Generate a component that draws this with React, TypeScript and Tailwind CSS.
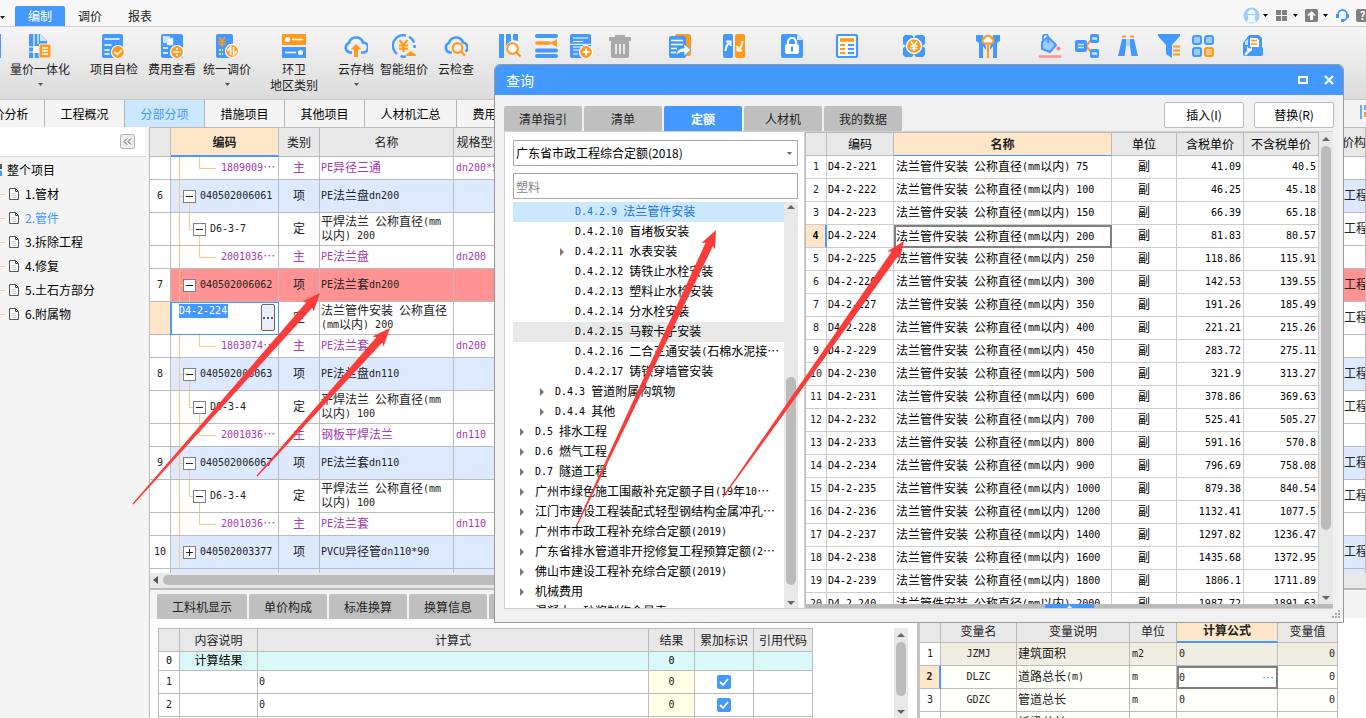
import React, { useState } from 'react';

const B = '#4399ff';
const O = '#ff9a1a';

// Latin runs are set in a monospace face, half the width of a CJK glyph
const Mix: React.FC<{ t: string }> = ({ t }) => (
  <span className="inline-block pb-[2px] whitespace-pre">
    {t.split(/([\x20-\x7e]+)/).map((s, i) =>
      i % 2 ? <span key={i} className="align-[1px] font-['DejaVu_Sans_Mono',monospace] text-[10px] leading-none">{s}</span> : s
    )}
  </span>
);

/* ---------- toolbar icons, 24 x 24 ---------- */

const icons: Record<string, React.ReactNode> = {
  integrate: (
    <>
      <path d="M1 0h11l7 7v17H1z" fill={B} />
      <path d="M12 0v7h7z" fill="#cfe5ff" />
      <path d="M6 0v24M10 0v10M1 13h18M1 18h9" stroke="#fff" strokeWidth="1.2" />
      <rect x="5" y="12" width="6" height="7" fill="#fff" />
      <rect x="11" y="10" width="12" height="14" rx="2" fill={O} stroke="#f0f0f0" />
      <path d="M14 14h6M14 17h6M14 20h6" stroke="#fff" strokeWidth="1.4" />
    </>
  ),
  check: (
    <>
      <rect x="0" y="0" width="21" height="24" rx="2" fill={B} />
      <path d="M3 5h14M3 11h6M3 16h4M3 20h4" stroke="#fff" strokeWidth="1.6" strokeLinecap="round" />
      <circle cx="16" cy="18" r="6.5" fill={O} stroke="#fff" strokeWidth="1.2" />
      <path d="M12.5 18l3 2.6 4.2-4.6" stroke="#fff" strokeWidth="1.8" fill="none" />
    </>
  ),
  cost: (
    <>
      <rect x="1" y="0" width="22" height="24" rx="2" fill={B} />
      <path d="M3 2h7v7H3z" fill="#cfe5ff" />
      <path d="M7 4h6v7H7z" fill="#fff" stroke="#a9d0ff" strokeWidth=".7" />
      <path d="M3 14h5M3 19h5" stroke="#fff" strokeWidth="1.6" />
      <circle cx="17" cy="18" r="6.5" fill={O} stroke="#fff" strokeWidth="1.2" />
      <path d="M13 18h8" stroke="#fff" strokeWidth="1.5" />
      <circle cx="17" cy="15" r="1" fill="#fff" />
      <circle cx="17" cy="21" r="1" fill="#fff" />
    </>
  ),
  adjust: (
    <>
      <rect x="1" y="0" width="17" height="24" rx="2" fill={B} />
      <path d="M4 3l3 4 3-4M7 7v6M3.5 7.5h7M3.5 10h7" stroke={O} strokeWidth="1.6" fill="none" />
      <path d="M4 16h4M4 20h4" stroke="#fff" strokeWidth="1.5" strokeDasharray="2 1" />
      <circle cx="17" cy="17" r="6.6" fill={O} stroke="#fff" strokeWidth="1.2" />
      <path d="M15.6 21v-8l-3.2 4M18.6 13v8l3-4" stroke="#fff" strokeWidth="1.7" fill="none" />
    </>
  ),
  region: (
    <>
      <rect x="0" y="0" width="24" height="11" fill={O} />
      <rect x="0" y="13" width="24" height="11" fill={B} />
      <circle cx="5.5" cy="5.5" r="2.6" fill="#fff" />
      <path d="M10 5.5h11M3 18.5h11" stroke="#fff" strokeWidth="1.6" />
      <circle cx="18.5" cy="18.5" r="2.6" fill="#fff" />
    </>
  ),
  cloudUp: (
    <>
      <path d="M8 18.5H6a5 5 0 0 1-1-9.6A7.3 7.3 0 0 1 19 8.5a5 5 0 0 1 0 10h-2" stroke={B} strokeWidth="2.6" fill="none" />
      <path d="M12 10l5.5 5.5H14V23h-4v-7.5H6.5z" fill={O} />
    </>
  ),
  smart: (
    <>
      <path d="M14 1.5A10.5 10.5 0 0 0 5 20M8.5 22.2A10.5 10.5 0 0 0 14 22.4M17 2.7a10.5 10.5 0 0 1 5 6M22.6 11v3" stroke={B} strokeWidth="2.4" fill="none" />
      <path d="M7.5 6l4 5 4-5M11.5 11v7M7 11.5h9M7 14.7h9" stroke={O} strokeWidth="2.2" fill="none" />
      <path d="M14 22h10c0-2-1.5-3-3-3-.5-2-4-2-4.3 0-1.7 0-2.7 1.2-2.7 3z" fill={O} />
    </>
  ),
  cloudFind: (
    <>
      <path d="M8 18.5H6a5 5 0 0 1-1-9.6A7.3 7.3 0 0 1 19 8.5a5 5 0 0 1 2.5 9" stroke={B} strokeWidth="2.6" fill="none" />
      <circle cx="13.5" cy="14" r="4.8" stroke={O} strokeWidth="2.2" fill="none" />
      <path d="M17 17.5l4 4" stroke={O} strokeWidth="2.4" />
    </>
  ),
  query: (
    <>
      <path d="M1 0h5v24H1zM8 0h5v7l-3 2-2 3zM15 0h5v7l-5-1z" fill={B} />
      <circle cx="14.5" cy="14.5" r="5.3" stroke={O} strokeWidth="2" fill="#fff" />
      <path d="M18.5 18.5l4 4" stroke={O} strokeWidth="2.4" />
    </>
  ),
  insertRow: (
    <>
      <path d="M3 2h19M3 16.5h19M3 22h19" stroke={B} strokeWidth="4" strokeLinecap="round" />
      <path d="M3 9h12" stroke={O} strokeWidth="3.6" strokeLinecap="round" />
      <path d="M23 5v8l-7-4z" fill={O} />
    </>
  ),
  addItem: (
    <>
      <rect x="1" y="0" width="21" height="24" rx="2" fill={B} />
      <path d="M4 4h15M4 7.5h10M4 13h14M4 16h8M4 20h5" stroke="#fff" strokeWidth="1.2" />
      <path d="M1 10.3h21" stroke="#fff" />
      <circle cx="17" cy="18" r="6.5" fill={O} stroke="#fff" strokeWidth="1.2" />
      <path d="M13.5 18h7M17 14.5v7" stroke="#fff" strokeWidth="2" />
    </>
  ),
  trash: (
    <>
      <path d="M1 3h6V1h10v2h6v4H1z" fill="#a9a9a9" />
      <path d="M3 7h18v15a2 2 0 0 1-2 2H5a2 2 0 0 1-2-2z" fill="#a9a9a9" />
      <path d="M8 10v10M12 10v10M16 10v10" stroke="#f4f4f4" strokeWidth="1.7" />
    </>
  ),
  copyTo: (
    <>
      <rect x="7" y="0" width="16" height="22" rx="2" fill={O} />
      <rect x="1" y="2" width="17" height="22" rx="2" fill={B} />
      <path d="M3 6.5h12M3 10.5h12M3 14.5h6M3 18.5h5" stroke="#fff" strokeWidth="1.3" />
      <path d="M8 21c1-5 4-7 8-7v-4l7 6-7 6v-4c-3 0-5 1-8 3z" fill="#fff" stroke={B} strokeWidth=".8" />
    </>
  ),
  swap: (
    <>
      <rect x="1" y="0" width="10" height="24" rx="2" fill={B} />
      <rect x="13" y="0" width="10" height="24" rx="2" fill={O} />
      <path d="M3.5 17c.3-4 1-6 3.5-8M4 7.5h4.5V12" stroke="#fff" strokeWidth="2" fill="none" />
      <path d="M20.5 7c-.3 4-1 6-3.5 8M20 16.5h-4.5V12" stroke="#fff" strokeWidth="2" fill="none" />
    </>
  ),
  lock: (
    <>
      <path d="M3 0h14l6 6v16a2 2 0 0 1-2 2H3a2 2 0 0 1-2-2V2a2 2 0 0 1 2-2z" fill={B} />
      <path d="M17 0v6h6z" fill="#cfe5ff" />
      <rect x="5" y="10" width="14" height="10" rx="2" fill="#fff" />
      <path d="M8 11V8a4 4 0 0 1 8 0v3" stroke="#fff" strokeWidth="2.2" fill="none" />
      <path d="M12 12.5v5" stroke={B} strokeWidth="2" />
    </>
  ),
  report: (
    <>
      <rect x="2" y="1" width="20" height="22" rx="1.5" fill="#fff" stroke={B} strokeWidth="2.2" />
      <path d="M5 6h14" stroke={O} strokeWidth="3.6" />
      <path d="M5 11h5M5 15h5M5 19h5" stroke={O} strokeWidth="1.8" />
      <path d="M13 11h6M13 15h6M13 19h6" stroke={B} strokeWidth="1.8" />
    </>
  ),
  money: (
    <>
      <path d="M3 1h7l2 3 2-3h7l2 2v7l-3 2 3 2v7l-2 2h-7l-2-3-2 3H3l-2-2v-7l3-2-3-2V3z" fill={B} />
      <circle cx="12" cy="12" r="7.5" fill={O} stroke="#fff" strokeWidth="1.3" />
      <path d="M9 7.5l3 4 3-4M12 11.5V17M8.5 12h7M8.5 14.5h7" stroke="#fff" strokeWidth="1.5" fill="none" />
    </>
  ),
  pipe: (
    <>
      <path d="M0 1h7l2 8 1 4v3l-3-4v12H3V9L0 7zM24 1h-7l-2 8-1 4v3l3-4v12h4V9l3-2z" fill={B} />
      <path d="M12 10v14" stroke={O} strokeWidth="2.2" />
      <path d="M8.5 9.5a2.7 2.7 0 0 1 0-5.2 3.7 3.7 0 0 1 7 0 2.7 2.7 0 0 1 0 5.2z" fill="#fff" stroke={O} strokeWidth="2" />
    </>
  ),
  paint: (
    <>
      <path d="M10 3l8 8-6 7-8-3V8z" fill="#9ccbff" stroke={B} strokeWidth="2" strokeLinejoin="round" />
      <path d="M5 8V3.5a2.5 2.5 0 0 1 5-1V9" stroke={B} strokeWidth="1.8" fill="none" />
      <circle cx="20.5" cy="14.5" r="2" fill="#ff8080" />
      <path d="M2 22.5h20" stroke="#ff9090" strokeWidth="2.6" strokeLinecap="round" />
    </>
  ),
  nodes: (
    <>
      <path d="M11 12l6-7M11 12l6 7" stroke={O} strokeWidth="2" />
      <rect x="0" y="6" width="12" height="12" rx="2" fill={B} />
      <path d="M3 10.5h6M3 13.5h6" stroke="#cfe5ff" strokeWidth="1.7" />
      <rect x="15" y="0" width="9" height="9" rx="2" fill={B} />
      <rect x="15" y="15" width="9" height="9" rx="2" fill={B} />
      <path d="M18 4.5h3M18 19.5h3" stroke="#cfe5ff" strokeWidth="2.6" strokeLinecap="round" />
    </>
  ),
  find: (
    <>
      <path d="M6 2.5h4M14 2.5h4" stroke={O} strokeWidth="2" />
      <path d="M6 5h4v8l-1.5 9H2zM14 5h4l4 17h-6.5L14 13z" fill={B} />
      <path d="M11 5v7M13 5v7" stroke="#8fc3ff" strokeWidth="1.3" />
    </>
  ),
  filter: (
    <>
      <path d="M1 0h22v2l-8 9v13l-6-4v-9L1 2z" fill={B} />
      <path d="M16 12.5h7M16 16.5h7M16 20.5h7" stroke={O} strokeWidth="2" />
    </>
  ),
  blocks: (
    <>
      <rect x="2" y="2" width="8" height="8" rx="2" fill="#9ccbff" stroke={B} strokeWidth="2" />
      <rect x="14" y="2" width="8" height="8" rx="2" fill="#9ccbff" stroke={B} strokeWidth="2" />
      <rect x="2" y="14" width="8" height="8" rx="2" fill="#9ccbff" stroke={B} strokeWidth="2" />
      <rect x="14" y="14" width="8" height="8" rx="2" fill="#ffc67f" stroke={O} strokeWidth="2" />
    </>
  ),
  tools: (
    <>
      <path d="M2 9l3-4 3-4h10l3 3v9l1 1v6a2 2 0 0 1-2 2H4a2 2 0 0 1-2-2z" fill={B} />
      <path d="M4 8l3-3v6H4z" fill="#cfe5ff" />
      <path d="M9 4h7l2 2v7H9z" fill="#fff" />
      <path d="M10 6.5h6M10 10h6" stroke={O} strokeWidth="1.7" />
      <path d="M5 20l3.5-4" stroke="#fff" strokeWidth="2.6" strokeLinecap="round" />
      <path d="M6 12l1.5 2.5H10l1-2v3.5l-2 2-3-2z" fill="#fff" />
    </>
  ),
};

const Icon: React.FC<{ name: string }> = ({ name }) => (
  <svg width="24" height="24" viewBox="0 0 24 24" className="shrink-0" aria-hidden="true">{icons[name]}</svg>
);

const Caret: React.FC<{ className?: string }> = ({ className }) => (
  <svg width="5" height="3" viewBox="0 0 5 3" className={className} aria-hidden="true"><path d="M0 0h5L2.5 3z" fill="currentColor" /></svg>
);

const tools = [
  { icon: 'integrate', label: '量价一体化', drop: true, gap: 'ml-[10px]' },
  { icon: 'check', label: '项目自检', gap: 'ml-5' },
  { icon: 'cost', label: '费用查看', gap: 'ml-[10px]' },
  { icon: 'adjust', label: '统一调价', drop: true, gap: 'ml-[7px]' },
  { icon: 'region', label: '环卫', second: '地区类别', gap: 'ml-[19px]' },
  { icon: 'cloudUp', label: '云存档', drop: true, gap: 'ml-5' },
  { icon: 'smart', label: '智能组价', gap: 'ml-[6px]' },
  { icon: 'cloudFind', label: '云检查', gap: 'ml-[10px]' },
];

const iconTools = [
  { icon: 'query', name: '查询', gap: 'ml-6' },
  { icon: 'insertRow', name: '插入', gap: 'ml-3' },
  { icon: 'addItem', name: '补充', gap: 'ml-[11px]' },
  { icon: 'trash', name: '删除', gap: 'ml-[15px]' },
  { icon: 'copyTo', name: '复制到', gap: 'ml-9' },
  { icon: 'swap', name: '替换', gap: 'ml-[30px]' },
  { icon: 'lock', name: '锁定', gap: 'ml-[34px]' },
  { icon: 'report', name: '清单', gap: 'ml-[31px]' },
  { icon: 'money', name: '组价', gap: 'ml-[43px]' },
  { icon: 'pipe', name: '安装费用', gap: 'ml-[50px]' },
  { icon: 'paint', name: '颜色', gap: 'ml-[38px]' },
  { icon: 'nodes', name: '展开到', gap: 'ml-[13px]' },
  { icon: 'find', name: '查找', gap: 'ml-[17px]' },
  { icon: 'filter', name: '过滤', gap: 'ml-[17px]' },
  { icon: 'blocks', name: '其他', gap: 'ml-[10px]' },
  { icon: 'tools', name: '工具', gap: 'ml-[26px]' },
];

const MenuBar = () => (
  <nav className="flex h-[27px] shrink-0 items-end border-b border-[#d2d2d2] bg-[#f7f7f7] text-[#222]">
    <div className="flex h-full w-[15px] items-center pt-[8px]"><Caret /></div>
    <button className="h-5 w-[50px] rounded-t-xs bg-[#4399ff] text-white">编制</button>
    <button className="h-5 w-[50px]">调价</button>
    <button className="h-5 w-[50px]">报表</button>
    <div className="ml-auto flex h-[22px] w-[123px] items-center overflow-hidden text-black">
      <svg width="17" height="17" viewBox="0 0 17 17" className="shrink-0" aria-hidden="true">
        <circle cx="8.5" cy="8.5" r="8" fill="#9dcbfa" />
        <path d="M4.5 7.5a4 5 0 0 1 8 0l-1 4 2 4h-10l2-4z" fill="#f2f8ff" />
        <path d="M4 7.5h9" stroke="#9dcbfa" />
      </svg>
      <Caret className="ml-[3px] shrink-0" />
      <svg width="11" height="11" viewBox="0 0 11 11" className="ml-[8px] shrink-0" aria-hidden="true">
        <path d="M0 0h5v5H0zM6 0h5v5H6zM0 6h5v5H0zM6 6h5v5H6z" fill="#808080" />
      </svg>
      <Caret className="ml-[6px] shrink-0" />
      <svg width="13" height="13" viewBox="0 0 13 13" className="ml-[7px] shrink-0" aria-hidden="true">
        <rect width="13" height="13" rx="1.5" fill="#808080" />
        <path d="M6.5 2L11 6.5H8V11H5V6.5H2z" fill="#fff" />
      </svg>
      <Caret className="ml-[5px] shrink-0" />
      <svg width="13" height="14" viewBox="0 0 13 14" className="ml-[8px] shrink-0" aria-hidden="true">
        <path d="M2 8V6.5a4.5 4.5 0 0 1 9 0V8c0 2.500-1 4-4 4.500" stroke={B} strokeWidth="1.8" fill="none" />
        <path d="M0 6h3v4H0zM10 6h3v4h-3zM5 11h3v3H5z" fill={B} />
      </svg>
      <span className="ml-[7px] h-[13px] w-[13px] shrink-0 rounded-xs bg-[#808080] text-center text-[11px] leading-[13px] font-bold text-white">?</span>
    </div>
  </nav>
);

const Toolbar = () => (
  <div className="flex h-[73px] shrink-0 items-start overflow-hidden border-b border-[#c4c4c4] bg-linear-to-b from-[#f5f5f5] to-[#dcdcdc] pt-[7px] text-[#222]">
    <div className="-mr-px h-6 w-px shrink-0 bg-[#4399ff]" />
    {tools.map(t => (
      <button key={t.label} className={`flex shrink-0 flex-col items-center whitespace-nowrap ${t.gap}`}>
        <Icon name={t.icon} />
        <span className="mt-[3px] h-4 leading-4">{t.label}</span>
        {t.second && <span className="h-4 leading-4">{t.second}</span>}
        {t.drop && <Caret className="mt-[6px] text-[#555]" />}
      </button>
    ))}
    {iconTools.map(t => (
      <button key={t.icon} aria-label={t.name} className={`shrink-0 ${t.gap}`}><Icon name={t.icon} /></button>
    ))}
  </div>
);

const pageTabs = ['造价分析', '工程概况', '分部分项', '措施项目', '其他项目', '人材机汇总', '费用汇总'];

const PageTabs = () => (
  <div className="flex h-[27px] shrink-0 overflow-hidden bg-[#f4f4f4] text-black">
    {pageTabs.map((t, i) => (
      <button
        key={t}
        className={`shrink-0 border-r border-[#b4b4b4] ${t.length > 4 ? 'w-[92px]' : 'w-20'} ${i === 0 ? '-ml-[35px]' : ''} ${i === 2 ? 'bg-[#cce8ff] text-[#4399ff]' : ''}`}
      >
        {t}
      </button>
    ))}
    <svg width="6" height="16" viewBox="0 0 6 16" className="mt-1 ml-auto" aria-hidden="true">
      <path d="M1 1v14M5 1v5" stroke={B} strokeWidth="1.6" />
      <path d="M5 8v5" stroke={O} strokeWidth="2" />
    </svg>
  </div>
);

const sections = ['1.管材', '2.管件', '3.拆除工程', '4.修复', '5.土石方部分', '6.附属物'];

const Sidebar = () => (
  <aside className="w-[149px] shrink-0 bg-[#f4f4f4] text-black">
    <div className="mr-[4px] flex h-[30px] justify-end border-b border-[#ddd] bg-white pt-[7px] pr-[10px]">
      <button aria-label="收起" className="flex h-[15px] w-[15px] items-center justify-center rounded-xs border border-[#b4b4b4] bg-[#ececec]">
        <svg width="9" height="7" viewBox="0 0 9 7" aria-hidden="true"><path d="M4 .5l-3 3 3 3M8 .5l-3 3 3 3" stroke="#555" fill="none" /></svg>
      </button>
    </div>
    <ul className="pt-px">
      <li className="flex h-6 items-center gap-[5px]">
        <svg width="2" height="12" viewBox="0 0 2 12" aria-hidden="true"><path d="M0 0h2v5H0z" fill="#555" /><path d="M0 7h2v5H0z" fill={B} /></svg>
        整个项目
      </li>
      {sections.map((s, i) => (
        <li key={s} className={`flex h-6 items-center ${i === 1 ? 'text-[#4399ff]' : ''}`}>
          <span className="h-px w-[5px] bg-[#ffc67f]" />
          <svg width="10" height="12" viewBox="0 0 10 12" className="mr-[6px] ml-[4px]" aria-hidden="true">
            <path d="M.5.5h6l3 3v8h-9z" fill="#fff" stroke="#555" />
            <path d="M6.5.5v3h3" fill="none" stroke="#555" />
            <path d="M2.5 5.5h5M2.5 7.5h5M2.5 9.5h5" stroke="#ccc" />
          </svg>
          {s}
        </li>
      ))}
    </ul>
  </aside>
);

/* ---------- main grid ---------- */

type Row = { n?: string; level: 1 | 2 | 3; code: string; kind: string; name: string; spec?: string; state?: 'edit' | 'red' | 'closed' };

const rows: Row[] = [
  { level: 3, code: '1809009…', kind: '主', name: 'PE异径三通', spec: 'dn200*90' },
  { n: '6', level: 1, code: '040502006061', kind: '项', name: 'PE法兰盘dn200' },
  { level: 2, code: 'D6-3-7', kind: '定', name: '平焊法兰 公称直径(mm\n以内) 200' },
  { level: 3, code: '2001036…', kind: '主', name: 'PE法兰盘', spec: 'dn200' },
  { n: '7', level: 1, code: '040502006062', kind: '项', name: 'PE法兰套dn200', state: 'red' },
  { level: 2, code: 'D4-2-224', kind: '定', name: '法兰管件安装 公称直径\n(mm以内) 200', state: 'edit' },
  { level: 3, code: '1803074…', kind: '主', name: 'PE法兰套', spec: 'dn200' },
  { n: '8', level: 1, code: '040502006063', kind: '项', name: 'PE法兰盘dn110' },
  { level: 2, code: 'D6-3-4', kind: '定', name: '平焊法兰 公称直径(mm\n以内) 100' },
  { level: 3, code: '2001036…', kind: '主', name: '钢板平焊法兰', spec: 'dn110' },
  { n: '9', level: 1, code: '040502006067', kind: '项', name: 'PE法兰套dn110' },
  { level: 2, code: 'D6-3-4', kind: '定', name: '平焊法兰 公称直径(mm\n以内) 100' },
  { level: 3, code: '2001036…', kind: '主', name: 'PE法兰套', spec: 'dn110' },
  { n: '10', level: 1, code: '040502003377', kind: '项', name: 'PVCU异径管dn110*90', state: 'closed' },
];

const CodeCell: React.FC<{ row: Row }> = ({ row }) => {
  const [code, setCode] = useState(row.code);
  if (row.state === 'edit') {
    return (
      <div className="-ml-px flex h-[33px] items-start justify-between border border-l-2 border-[#4399ff] bg-white pt-px pr-[3px] pl-[7px]">
        <input
          aria-label="编码"
          value={code}
          onChange={e => setCode(e.target.value)}
          className="h-[14px] w-[49px] bg-[#4399ff] font-['DejaVu_Sans_Mono',monospace] text-[10px] text-white outline-none"
        />
        <button aria-label="选择" className="flex h-[27px] w-[14px] items-center justify-center gap-[2px] rounded-xs border border-[#666] bg-[#e9eefa]">
          <i className="h-[2px] w-[2px] bg-[#555]" /><i className="h-[2px] w-[2px] bg-[#555]" /><i className="h-[2px] w-[2px] bg-[#555]" />
        </button>
      </div>
    );
  }
  if (row.level === 3) {
    return (
      <div className="flex h-[22px] items-center">
        <svg width="50" height="23" className="shrink-0" aria-hidden="true"><path d="M8.5 0v23M28.5 0v11.5H45" stroke="#ffc67f" fill="none" /></svg>
        <Mix t={row.code} />
      </div>
    );
  }
  const top = row.level === 1;
  const lines = top
    ? `M8.5 0v33M8.5 16.5h5${row.state === 'closed' ? '' : 'M18.5 20v13'}`
    : 'M8.5 0v33M18.5 0v16.5h5M28.5 20v13';
  return (
    <div className={`relative flex h-8 items-center gap-1 ${top ? 'pl-3' : 'pl-[22px]'}`}>
      <svg width="50" height="33" className="absolute top-0 left-0" aria-hidden="true"><path d={lines} stroke="#ffc67f" fill="none" /></svg>
      <button aria-label="展开或折叠" className="relative h-[13px] w-[13px] border border-[#808080] bg-white">
        <svg width="11" height="11" viewBox="0 0 11 11" aria-hidden="true">
          <path d={row.state === 'closed' ? 'M2 5.5h7M5.5 2v7' : 'M2 5.5h7'} stroke="#222" />
        </svg>
      </button>
      <Mix t={row.code} />
    </div>
  );
};

const cell = 'overflow-hidden border-r border-b border-[#bbb] p-0';

const MainGrid = () => (
  <div className="h-[446px] shrink-0 overflow-hidden bg-white">
    <table className="w-full table-fixed border-separate border-spacing-0 border-t border-[#bbb] leading-[14px] text-[#222]">
      <colgroup>
        <col className="w-[21px]" />
        <col className="w-[108px]" />
        <col className="w-[41px]" />
        <col className="w-[134px]" />
        <col className="w-[54px]" />
        <col />
        <col className="w-[24px]" />
      </colgroup>
      <thead>
        <tr className="h-[29px] bg-[#e8e8e8]">
          <th className={cell} />
          <th className="border-r border-b-2 border-r-[#bbb] border-b-[#4399ff] bg-[#ffe6c8] p-0 font-bold">编码</th>
          <th className={`${cell} font-normal`}>类别</th>
          <th className={`${cell} font-normal`}>名称</th>
          <th className={`${cell} font-normal`}>规格型号</th>
          <th className={cell} />
          <th className={`${cell} text-left font-normal whitespace-nowrap`}>价构</th>
        </tr>
      </thead>
      <tbody>
        {rows.map((r, i) => (
          <tr
            key={i}
            className={`${r.level === 3 ? 'h-[23px] text-[#a33bb4]' : 'h-[33px]'} ${r.state === 'red' ? 'bg-[#ff9393]' : r.level === 1 ? 'bg-[#dde9ff]' : ''}`}
          >
            <td className={`${cell} text-center ${r.state === 'edit' ? 'bg-[#ffe6c8]' : 'bg-white'}`}><Mix t={r.n ?? ''} /></td>
            <td className={r.state === 'edit' ? 'p-0' : cell}><CodeCell row={r} /></td>
            <td className={`${cell} text-center`}><Mix t={r.kind} /></td>
            <td className={`${cell} pl-px`}><Mix t={r.name} /></td>
            <td className={`${cell} pl-[2px]`}><Mix t={r.spec ?? ''} /></td>
            <td className={cell} />
            <td className={`${cell} pl-[2px]`}><Mix t={r.level === 3 ? '' : '工程'} /></td>
          </tr>
        ))}
        <tr className="h-[33px] bg-[#dde9ff]">
          {[0, 1, 2, 3, 4, 5, 6].map(c => (
            <td key={c} className={`${cell} ${c === 0 ? 'bg-white' : ''}`} />
          ))}
        </tr>
      </tbody>
    </table>
  </div>
);

const HScroll = () => (
  <div className="flex h-[15px] shrink-0 items-start bg-[#e8e8e8] pt-[2px] pl-[3px]">
    <svg width="5" height="8" viewBox="0 0 5 8" className="mt-px" aria-hidden="true"><path d="M5 0v8L0 4z" fill="#555" /></svg>
    <div className="ml-[5px] h-[10px] w-4/5 rounded-full bg-[#bbb]" />
  </div>
);

const VScroll: React.FC<{ thumb: string }> = ({ thumb }) => (
  <div className="flex w-[14px] shrink-0 flex-col items-center bg-[#e8e8e8]">
    <svg width="8" height="4" viewBox="0 0 8 4" className="my-[5px] shrink-0" aria-hidden="true"><path d="M0 4h8L4 0z" fill="#666" /></svg>
    <div className={`w-[10px] rounded-full bg-[#bbb] ${thumb}`} />
    <svg width="8" height="4" viewBox="0 0 8 4" className="mt-auto mb-[4px] shrink-0" aria-hidden="true"><path d="M0 0h8L4 4z" fill="#666" /></svg>
  </div>
);

const lowerTabs = ['工料机显示', '单价构成', '标准换算', '换算信息'];

const CalcPane = () => (
  <section className="flex min-w-0 flex-1 flex-col overflow-hidden bg-white">
    <div className="flex h-[29px] shrink-0 items-end gap-[2px] bg-[#f4f4f4] pl-[7px]">
      {lowerTabs.map(t => (
        <button key={t} className={`h-[25px] rounded-t-xs bg-[#bfbfbf] text-[#222] ${t.length > 4 ? 'w-[90px]' : 'w-[78px]'}`}>{t}</button>
      ))}
      <button aria-label="更多" className="h-[25px] w-[78px] rounded-t-xs bg-[#bfbfbf]" />
    </div>
    <div className="flex flex-1 overflow-hidden pt-[9px] pl-[8px]">
      <div>
        <table className="table-fixed border-separate border-spacing-0 border-t border-l border-[#bbb] text-center leading-[14px] text-[#222]">
          <colgroup>
            <col className="w-[21px]" />
            <col className="w-[78px]" />
            <col className="w-[391px]" />
            <col className="w-[46px]" />
            <col className="w-[59px]" />
            <col className="w-[59px]" />
          </colgroup>
          <thead>
            <tr className="h-[23px] bg-[#e8e8e8]">
              {['', '内容说明', '计算式', '结果', '累加标识', '引用代码'].map(h => (
                <th key={h} className={`${cell} font-normal`}>{h}</th>
              ))}
            </tr>
          </thead>
          <tbody>
            <tr className="h-[19px] bg-[#daf8f8] text-black">
              <td className={`${cell} bg-white`}><Mix t="0" /></td>
              <td className={cell}><Mix t="计算结果" /></td>
              <td className={cell} />
              <td className={cell}><Mix t="0" /></td>
              <td className={cell} />
              <td className={cell} />
            </tr>
            {['1', '2', '3'].map(n => (
              <tr key={n} className="h-[23px]">
                <td className={cell}><Mix t={n} /></td>
                <td className={cell} />
                <td className={`${cell} pl-px text-left`}><Mix t="0" /></td>
                <td className={`${cell} bg-[#ffffe6]`}><Mix t="0" /></td>
                <td className={cell}>
                  <label className="relative mx-auto block h-[14px] w-[14px]">
                    <input type="checkbox" defaultChecked aria-label="累加标识" className="peer block h-[14px] w-[14px] appearance-none rounded-xs border border-[#999] checked:border-[#4399ff] checked:bg-[#4399ff]" />
                    <svg width="14" height="14" viewBox="0 0 14 14" className="pointer-events-none absolute inset-0 hidden peer-checked:block" aria-hidden="true">
                      <path d="M3 7l3 3 5-6" stroke="#fff" strokeWidth="1.8" fill="none" />
                    </svg>
                  </label>
                </td>
                <td className={cell} />
              </tr>
            ))}
          </tbody>
        </table>
      </div>
      <div className="mr-[9px] ml-auto flex"><VScroll thumb="h-[54px]" /></div>
    </div>
  </section>
);

const variables = [
  ['1', 'JZMJ', '建筑面积', 'm2'],
  ['2', 'DLZC', '道路总长(m)', 'm'],
  ['3', 'GDZC', '管道总长', 'm'],
  ['4', 'QLZC', '桥梁总长(m)', 'm'],
];

const VariablePane = () => (
  <section className="w-[449px] shrink-0 overflow-hidden border-l-3 border-[#c4c4c4] bg-white">
    <div className="h-[28px] bg-[#f4f4f4]" />
    <table className="w-[418px] table-fixed border-separate border-spacing-0 border-t border-[#bbb] leading-[14px] text-[#222]">
      <colgroup>
        <col className="w-[21px]" />
        <col className="w-[76px]" />
        <col className="w-[113px]" />
        <col className="w-[47px]" />
        <col className="w-[101px]" />
        <col className="w-[60px]" />
      </colgroup>
      <thead>
        <tr className="h-[24px] bg-[#e8e8e8]">
          {['', '变量名', '变量说明', '单位'].map(h => (
            <th key={h} className={`${cell} font-normal`}>{h}</th>
          ))}
          <th className="border-r border-b-2 border-r-[#bbb] border-b-[#4399ff] bg-[#ffe6c8] p-0 font-bold">计算公式</th>
          <th className={`${cell} font-normal`}>变量值</th>
        </tr>
      </thead>
      <tbody>
        {variables.map(([n, code, name, unit], i) => (
          <tr key={n} className={`h-[23px] ${i === 0 ? 'bg-[#f0eee0]' : 'bg-[#fffffa]'}`}>
            <td className={i === 1 ? 'border-r-2 border-b border-r-[#4399ff] border-b-[#bbb] bg-[#ffe6c8] p-0 text-center font-bold' : `${cell} bg-white text-center`}><Mix t={n} /></td>
            <td className={`${cell} text-center`}><Mix t={code} /></td>
            <td className={`${cell} pl-px`}><Mix t={name} /></td>
            <td className={`${cell} pl-[2px]`}><Mix t={unit} /></td>
            <td className={i === 1 ? 'p-0' : `${cell} pl-[2px]`}>
              {i === 1 ? (
                <div className="flex h-[23px] items-center justify-between border-2 border-[#808080] bg-white pr-[2px]">
                  <Mix t="0" /><span className="text-[#4399ff]">…</span>
                </div>
              ) : <Mix t="0" />}
            </td>
            <td className={`${cell} pr-[2px] text-right`}><Mix t="0" /></td>
          </tr>
        ))}
      </tbody>
    </table>
  </section>
);

/* ---------- query dialog ---------- */

const tree: { t: string; level: 1 | 2 | 3; arrow?: boolean }[] = [
  { t: 'D.4.2.9 法兰管件安装', level: 3 },
  { t: 'D.4.2.10 盲堵板安装', level: 3 },
  { t: 'D.4.2.11 水表安装', level: 3, arrow: true },
  { t: 'D.4.2.12 铸铁止水栓安装', level: 3 },
  { t: 'D.4.2.13 塑料止水栓安装', level: 3 },
  { t: 'D.4.2.14 分水栓安装', level: 3 },
  { t: 'D.4.2.15 马鞍卡子安装', level: 3 },
  { t: 'D.4.2.16 二合三通安装(石棉水泥接…', level: 3 },
  { t: 'D.4.2.17 铸铁穿墙管安装', level: 3 },
  { t: 'D.4.3 管道附属构筑物', level: 2, arrow: true },
  { t: 'D.4.4 其他', level: 2, arrow: true },
  { t: 'D.5 排水工程', level: 1, arrow: true },
  { t: 'D.6 燃气工程', level: 1, arrow: true },
  { t: 'D.7 隧道工程', level: 1, arrow: true },
  { t: '广州市绿色施工围蔽补充定额子目(19年10…', level: 1, arrow: true },
  { t: '江门市建设工程装配式轻型钢结构金属冲孔…', level: 1, arrow: true },
  { t: '广州市市政工程补充综合定额(2019)', level: 1, arrow: true },
  { t: '广东省排水管道非开挖修复工程预算定额(2…', level: 1, arrow: true },
  { t: '佛山市建设工程补充综合定额(2019)', level: 1, arrow: true },
  { t: '机械费用', level: 1, arrow: true },
  { t: '混凝土、砂浆制作含量表', level: 1 },
];

const indent = { 1: 'pl-[7px]', 2: 'pl-[27px]', 3: 'pl-[47px]' };

const quotas = [
  ['75', '41.09', '40.5'], ['100', '46.25', '45.18'], ['150', '66.39', '65.18'], ['200', '81.83', '80.57'],
  ['250', '118.86', '115.91'], ['300', '142.53', '139.55'], ['350', '191.26', '185.49'], ['400', '221.21', '215.26'],
  ['450', '283.72', '275.11'], ['500', '321.9', '313.27'], ['600', '378.86', '369.63'], ['700', '525.41', '505.27'],
  ['800', '591.16', '570.8'], ['900', '796.69', '758.08'], ['1000', '879.38', '840.54'], ['1200', '1132.41', '1077.5'],
  ['1400', '1297.82', '1236.47'], ['1600', '1435.68', '1372.95'], ['1800', '1806.1', '1711.89'], ['2000', '1987.72', '1891.63'],
];

const QueryDialog = () => {
  const [tab, setTab] = useState('定额');
  const [picked, setPicked] = useState(3);
  const qcell = 'border-r border-b border-[#ccc] p-0';
  const qhead = 'border-r border-b border-[#bbb] p-0 font-normal';
  return (
    <div role="dialog" aria-label="查询" className="absolute top-[64px] right-[22px] bottom-[95px] left-[494px] flex flex-col rounded-t-md border border-[#999] bg-[#f1f1f1] text-black">
      <header className="flex h-[30px] shrink-0 items-center rounded-t-[5px] bg-[#4399ff] pr-[9px] pl-[11px] text-white">
        <h2 className="text-[14px]">查询</h2>
        <button aria-label="最大化" className="ml-auto h-2 w-[10px] border-2 border-white" />
        <button aria-label="关闭" className="ml-4">
          <svg width="10" height="10" viewBox="0 0 10 10" aria-hidden="true"><path d="M1 1l8 8M9 1L1 9" stroke="#fff" strokeWidth="2.2" /></svg>
        </button>
      </header>

      <div className="flex h-9 shrink-0 items-end gap-[2px] pr-[9px] pl-[9px]">
        {['清单指引', '清单', '定额', '人材机', '我的数据'].map(t => (
          <button
            key={t}
            onClick={() => setTab(t)}
            className={`h-[25px] w-[78px] rounded-t-xs ${tab === t ? 'bg-[#4399ff] font-bold text-white' : 'bg-[#bfbfbf] text-[#222]'}`}
          >
            {t}
          </button>
        ))}
        <button className="mb-[3px] ml-auto h-[26px] w-20 rounded-xs border border-[#bbb] bg-white">插入(I)</button>
        <button className="mb-[3px] ml-2 h-[26px] w-20 rounded-xs border border-[#bbb] bg-white">替换(R)</button>
      </div>

      <div className="mr-[10px] mb-[13px] ml-[9px] flex min-h-0 flex-1 border-t border-b border-[#d0d0d0]">
        {/* quota library tree */}
        <div className="flex w-[301px] shrink-0 flex-col border-r border-l border-[#d0d0d0] bg-white pt-2 pr-[6px] pl-2">
          <div className="relative">
            <select aria-label="定额库" className="block h-[26px] w-full appearance-none rounded-none border border-[#a9a9a9] bg-white pl-[2px] outline-none">
              <option>广东省市政工程综合定额(2018)</option>
            </select>
            <Caret className="pointer-events-none absolute top-3 right-[6px] text-[#666]" />
          </div>
          <input aria-label="搜索" placeholder="塑料" className="mt-[7px] block h-[26px] shrink-0 border border-[#a9a9a9] bg-white pl-[2px] outline-none placeholder:text-[#888]" />
          <div className="mt-[3px] flex min-h-0 flex-1 overflow-hidden">
            <ul className="flex-1 overflow-hidden leading-[18px]">
              {tree.map((n, i) => (
                <li
                  key={n.t}
                  className={`flex h-5 items-center ${indent[n.level]} ${i === 0 ? 'bg-[#cce8ff] text-[#1a73e8]' : i === 6 ? 'bg-[#e8e8e8]' : ''}`}
                >
                  <svg width="4" height="8" viewBox="0 0 4 8" className="mr-[11px] shrink-0" aria-hidden="true">
                    {n.arrow && <path d="M0 0v8l4-4z" fill="#777" />}
                  </svg>
                  <Mix t={n.t} />
                </li>
              ))}
            </ul>
            <div className="flex w-[14px] flex-col items-center bg-[#e8e8e8]">
              <svg width="8" height="4" viewBox="0 0 8 4" className="mt-[3px] shrink-0" aria-hidden="true"><path d="M0 4h8L4 0z" fill="#666" /></svg>
              <div className="mt-[168px] h-[208px] w-[10px] shrink-0 rounded-full bg-[#bbb]" />
              <svg width="8" height="4" viewBox="0 0 8 4" className="mt-auto mb-[3px] shrink-0" aria-hidden="true"><path d="M0 0h8L4 4z" fill="#666" /></svg>
            </div>
          </div>
        </div>

        {/* quota items */}
        <div className="flex min-w-0 flex-1 flex-col">
          <div className="flex min-h-0 flex-1 overflow-hidden bg-white">
            <div className="min-w-0 flex-1 overflow-hidden border-l border-[#bbb]">
              <table className="w-full table-fixed border-separate border-spacing-0 border-t border-[#bbb] leading-[14px]">
                <colgroup>
                  <col className="w-[21px]" />
                  <col className="w-[67px]" />
                  <col />
                  <col className="w-[65px]" />
                  <col className="w-[67px]" />
                  <col className="w-[75px]" />
                </colgroup>
                <thead>
                  <tr className="h-[23px] bg-[#e8e8e8]">
                    <th className={qhead} />
                    <th className={qhead}>编码</th>
                    <th className="border-r border-b border-r-[#bbb] border-b-[#4399ff] bg-[#ffe6c8] p-0 font-bold text-[#222]">名称</th>
                    <th className={qhead}>单位</th>
                    <th className={qhead}>含税单价</th>
                    <th className={qhead}>不含税单价</th>
                  </tr>
                </thead>
                <tbody>
                  {quotas.map(([dn, gross, net], i) => (
                    <tr key={dn} onClick={() => setPicked(i)} className="h-[23px]">
                      <td className={i === picked ? 'border-r-2 border-b border-r-[#4399ff] border-b-[#ccc] bg-[#ffe6c8] p-0 text-center font-bold' : `${qcell} text-center text-[#222]`}>
                        <Mix t={String(i + 1)} />
                      </td>
                      <td className={`${qcell} pl-px`}><Mix t={`D4-2-${221 + i}`} /></td>
                      <td className={i === picked ? 'p-0' : `${qcell} pl-[2px]`}>
                        {i === picked ? (
                          <div className="flex h-[23px] items-center border-2 border-[#808080]"><Mix t={`法兰管件安装 公称直径(mm以内) ${dn}`} /></div>
                        ) : <Mix t={`法兰管件安装 公称直径(mm以内) ${dn}`} />}
                      </td>
                      <td className={`${qcell} text-center`}><Mix t="副" /></td>
                      <td className={`${qcell} pr-[2px] text-right`}><Mix t={gross} /></td>
                      <td className={`${qcell} pr-[2px] text-right`}><Mix t={net} /></td>
                    </tr>
                  ))}
                </tbody>
              </table>
            </div>
            <VScroll thumb="h-[384px]" />
          </div>
          <div className="flex h-[4px] shrink-0 justify-center bg-[#bbb]">
            <button aria-label="展开" className="flex w-[49px] items-center justify-center bg-[#4399ff]">
              <svg width="5" height="3" viewBox="0 0 5 3" aria-hidden="true"><path d="M0 3h5L2.5 0z" fill="#fff" /></svg>
            </button>
          </div>
        </div>
      </div>
      <svg width="8" height="8" viewBox="0 0 8 8" className="absolute right-[3px] bottom-1" aria-hidden="true">
        <path d="M6 0h2v2H6zM3 3h2v2H3zM6 3h2v2H6zM0 6h2v2H0zM3 6h2v2H3zM6 6h2v2H6z" fill="#aaa" />
      </svg>
    </div>
  );
};

/* ---------- red pointers: [tail x, tail y, tip x, tip y] ---------- */

const pointers = [
  [133, 504, 320, 293],
  [257, 476, 390, 328],
  [577, 525, 716, 230],
  [723, 497, 904, 241],
];

const arrowPoints = ([x1, y1, x2, y2]: number[]) => {
  const len = Math.hypot(x2 - x1, y2 - y1);
  const ux = (x2 - x1) / len;
  const uy = (y2 - y1) / len;
  const at = (back: number, side: number) => `${x2 - ux * back - uy * side},${y2 - uy * back + ux * side}`;
  return [at(0, 0), at(18, 7.5), at(16, 4), at(len, 0.6), at(len, -0.6), at(16, -4), at(18, -7.5)].join(' ');
};

const Pointers = () => (
  <svg className="pointer-events-none absolute inset-0 h-full w-full" aria-hidden="true">
    {pointers.map((p, i) => <polygon key={i} points={arrowPoints(p)} fill="#fb3c3a" />)}
  </svg>
);

const App: React.FC = () => (
  <div className="relative flex h-screen w-full flex-col overflow-hidden bg-white font-['Noto_Sans_CJK_SC',sans-serif] text-[12px]">
    <MenuBar />
    <Toolbar />
    <PageTabs />
    <div className="flex min-h-0 flex-1">
      <Sidebar />
      <main className="flex min-w-0 flex-1 flex-col border-l border-[#bbb]">
        <MainGrid />
        <HScroll />
        <div className="h-[2px] shrink-0 bg-[#bbb]" />
        <div className="flex min-h-0 flex-1">
          <CalcPane />
          <VariablePane />
        </div>
      </main>
    </div>
    <QueryDialog />
    <Pointers />
  </div>
);

export default App;
